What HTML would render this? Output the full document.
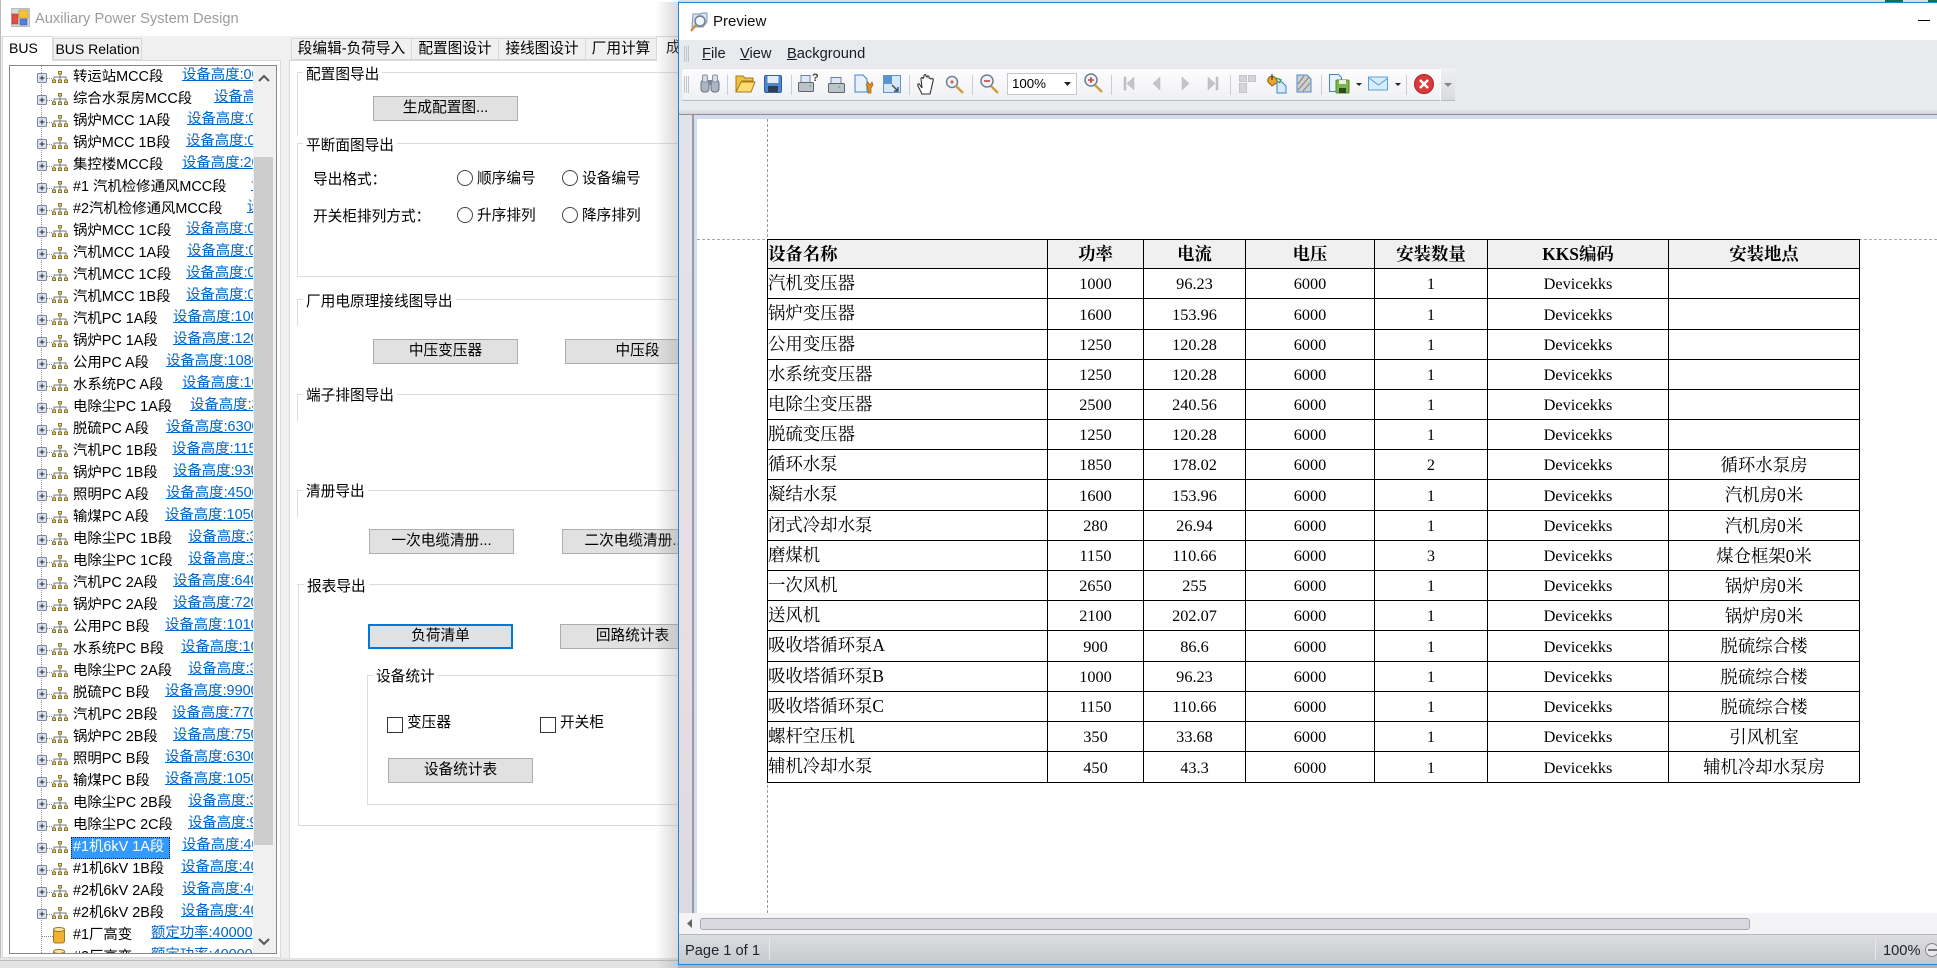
<!DOCTYPE html>
<html><head><meta charset="utf-8"><title>Auxiliary Power System Design</title>
<style>
html,body{margin:0;padding:0;width:1937px;height:968px;overflow:hidden;background:#e6e6e6;}
body{position:relative;font-family:"Liberation Sans","Noto Sans CJK SC",sans-serif;font-size:14.67px;color:#000;}
div,a,span,svg,b{box-sizing:border-box}
.a{position:absolute}
.t{position:absolute;line-height:20px;white-space:nowrap;font-size:14.67px}
.b{position:absolute;background:#e1e1e1;border:1px solid #adadad;height:25px;width:145px;text-align:center;line-height:22px;font-size:14.67px;white-space:nowrap}
.l{position:absolute;background:#dcdcdc}
.tab{position:absolute;top:38px;height:22px;background:#f0f0f0;border:1px solid #d9d9d9;text-align:center;line-height:20px;font-size:14.67px;white-space:nowrap;overflow:hidden}
.r{position:relative;height:22px;white-space:nowrap;font-size:14.4px}
.r svg{position:absolute;left:26px;top:2px;width:44px;height:22px}
.r b{position:absolute;left:63px;top:1px;font-weight:400;line-height:20px}
.r a{position:absolute;top:-1px;margin-left:-1px;line-height:20px;color:#0066cc;text-decoration:underline}
.rad{position:absolute;width:16px;height:16px;border:1px solid #444;border-radius:50%;background:#fff}
.chk{position:absolute;width:16px;height:16px;border:1px solid #333;background:#fff}
table{border-collapse:collapse;table-layout:fixed;width:1093px;font-family:"Liberation Serif","Noto Serif CJK SC",serif;font-size:16.3px;color:#000}
td,th{border:1px solid #000;text-align:center;box-sizing:border-box;line-height:20px;overflow:hidden;white-space:nowrap}
td{padding:1px 0 0}
th{padding:0 0 1px;background:#f0f0f0;font-size:17.4px;font-weight:700}
td.n,th.n{text-align:left;padding:0 0 2px;font-size:17.4px}
th.n{padding:0 0 1px}
td.c{font-size:17.4px;padding:0}
.m{position:absolute;top:44px;line-height:20px;font-size:14.67px;color:#1a1a2a}
.m u{text-decoration:underline}
</style></head><body>
<svg width="0" height="0" style="position:absolute"><defs>
<symbol id="n" viewBox="0 0 44 22">
<rect x="1.500" y="5.500" width="9" height="9" rx="1" fill="#dfe5f0" stroke="#7d88a0"/>
<path d="M3.500 10h5M6 7.500v5" stroke="#223" stroke-width="1"/>
<path d="M11 10.500h5" stroke="#888" stroke-dasharray="1 1"/>
<path d="M24 6v3M18 12V9h12v3M24 9v3" stroke="#777" fill="none"/>
<rect x="22.500" y="3.500" width="3" height="2.500" fill="#e8d890" stroke="#8a7a30"/>
<rect x="16.500" y="12" width="3" height="2.500" fill="#e8d890" stroke="#8a7a30"/>
<rect x="22.500" y="12" width="3" height="2.500" fill="#e8d890" stroke="#8a7a30"/>
<rect x="28.500" y="12" width="3" height="2.500" fill="#e8d890" stroke="#8a7a30"/>
</symbol>
<symbol id="c" viewBox="0 0 44 22">
<path d="M6 10.500h11" stroke="#888" stroke-dasharray="1 1"/>
<rect x="17.500" y="2" width="11" height="15" rx="2" fill="#f0b030" stroke="#a07820"/>
<ellipse cx="23" cy="3.500" rx="5.500" ry="2" fill="#fbe6a0" stroke="#a07820"/>
</symbol>
</defs></svg>

<!-- left app window -->
<div class="a" style="left:0;top:0;width:700px;height:36px;background:#fff"></div>
<div class="a" style="left:0;top:36px;width:700px;height:924px;background:#f0f0f0"></div>
<div class="a" style="left:0;top:0;width:1px;height:960px;background:#bbb"></div>
<svg class="a" style="left:11px;top:8px" width="19" height="19" viewBox="0 0 19 19">
<rect x=".5" y=".5" width="18" height="18" fill="#d8d8d8" stroke="#bbb"/>
<rect x="1" y="6" width="6" height="10" fill="#e05040" stroke="#a03020" stroke-width=".5"/>
<rect x="8" y="2" width="9" height="8" fill="#f4c040" stroke="#b08a20" stroke-width=".5"/>
<rect x="9" y="11" width="7" height="6" fill="#5080d8" stroke="#3050a0" stroke-width=".5"/>
</svg>
<div class="t" style="left:35px;top:9px;color:#9c9c9c;font-size:14.67px">Auxiliary Power System Design</div>

<!-- left tabs -->
<div class="a" style="left:2px;top:60px;width:279px;height:898px;background:#fff;border:1px solid #d9d9d9"></div>
<div class="tab" style="left:53px;width:89px;font-size:14px;line-height:21px">BUS Relation</div>
<div class="a" style="left:2px;top:36px;width:51px;height:25px;background:#fff;border:1px solid #d9d9d9;border-bottom:0;padding-left:6px;line-height:22px;font-size:14px">BUS</div>

<!-- tree -->
<div class="a" style="left:9px;top:65px;width:268px;height:889px;border:1px solid #828790;background:#fff"></div>
<div class="a" style="left:10px;top:66px;width:243px;height:887px;overflow:hidden;background:#fff">
<div class="a" style="left:31px;top:0;width:1px;height:887px;border-left:1px dotted #999"></div>
<div class="a" style="left:0;top:0;width:243px">
<div class="r"><svg><use href="#n"/></svg><b>转运站MCC段</b><a style="left:173px">设备高度:0000</a></div>
<div class="r"><svg><use href="#n"/></svg><b>综合水泵房MCC段</b><a style="left:205px">设备高度:0000</a></div>
<div class="r"><svg><use href="#n"/></svg><b>锅炉MCC 1A段</b><a style="left:178px">设备高度:0000</a></div>
<div class="r"><svg><use href="#n"/></svg><b>锅炉MCC 1B段</b><a style="left:177px">设备高度:0000</a></div>
<div class="r"><svg><use href="#n"/></svg><b>集控楼MCC段</b><a style="left:173px">设备高度:2000</a></div>
<div class="r"><svg><use href="#n"/></svg><b>#1 汽机检修通风MCC段</b><a style="left:242px">设备高度:0</a></div>
<div class="r"><svg><use href="#n"/></svg><b>#2汽机检修通风MCC段</b><a style="left:238px">设备高度:0</a></div>
<div class="r"><svg><use href="#n"/></svg><b>锅炉MCC 1C段</b><a style="left:177px">设备高度:0000</a></div>
<div class="r"><svg><use href="#n"/></svg><b>汽机MCC 1A段</b><a style="left:178px">设备高度:0000</a></div>
<div class="r"><svg><use href="#n"/></svg><b>汽机MCC 1C段</b><a style="left:177px">设备高度:0000</a></div>
<div class="r"><svg><use href="#n"/></svg><b>汽机MCC 1B段</b><a style="left:177px">设备高度:0000</a></div>
<div class="r"><svg><use href="#n"/></svg><b>汽机PC 1A段</b><a style="left:164px">设备高度:1000</a></div>
<div class="r"><svg><use href="#n"/></svg><b>锅炉PC 1A段</b><a style="left:164px">设备高度:1200</a></div>
<div class="r"><svg><use href="#n"/></svg><b>公用PC A段</b><a style="left:157px">设备高度:1080</a></div>
<div class="r"><svg><use href="#n"/></svg><b>水系统PC A段</b><a style="left:173px">设备高度:1000</a></div>
<div class="r"><svg><use href="#n"/></svg><b>电除尘PC 1A段</b><a style="left:181px">设备高度:3000</a></div>
<div class="r"><svg><use href="#n"/></svg><b>脱硫PC A段</b><a style="left:157px">设备高度:6300</a></div>
<div class="r"><svg><use href="#n"/></svg><b>汽机PC 1B段</b><a style="left:163px">设备高度:1150</a></div>
<div class="r"><svg><use href="#n"/></svg><b>锅炉PC 1B段</b><a style="left:164px">设备高度:9300</a></div>
<div class="r"><svg><use href="#n"/></svg><b>照明PC A段</b><a style="left:157px">设备高度:4500</a></div>
<div class="r"><svg><use href="#n"/></svg><b>输煤PC A段</b><a style="left:156px">设备高度:1050</a></div>
<div class="r"><svg><use href="#n"/></svg><b>电除尘PC 1B段</b><a style="left:179px">设备高度:3000</a></div>
<div class="r"><svg><use href="#n"/></svg><b>电除尘PC 1C段</b><a style="left:179px">设备高度:3000</a></div>
<div class="r"><svg><use href="#n"/></svg><b>汽机PC 2A段</b><a style="left:164px">设备高度:6400</a></div>
<div class="r"><svg><use href="#n"/></svg><b>锅炉PC 2A段</b><a style="left:164px">设备高度:7200</a></div>
<div class="r"><svg><use href="#n"/></svg><b>公用PC B段</b><a style="left:156px">设备高度:1010</a></div>
<div class="r"><svg><use href="#n"/></svg><b>水系统PC B段</b><a style="left:172px">设备高度:1000</a></div>
<div class="r"><svg><use href="#n"/></svg><b>电除尘PC 2A段</b><a style="left:179px">设备高度:3000</a></div>
<div class="r"><svg><use href="#n"/></svg><b>脱硫PC B段</b><a style="left:156px">设备高度:9900</a></div>
<div class="r"><svg><use href="#n"/></svg><b>汽机PC 2B段</b><a style="left:163px">设备高度:7700</a></div>
<div class="r"><svg><use href="#n"/></svg><b>锅炉PC 2B段</b><a style="left:164px">设备高度:7500</a></div>
<div class="r"><svg><use href="#n"/></svg><b>照明PC B段</b><a style="left:156px">设备高度:6300</a></div>
<div class="r"><svg><use href="#n"/></svg><b>输煤PC B段</b><a style="left:156px">设备高度:1050</a></div>
<div class="r"><svg><use href="#n"/></svg><b>电除尘PC 2B段</b><a style="left:179px">设备高度:3000</a></div>
<div class="r"><svg><use href="#n"/></svg><b>电除尘PC 2C段</b><a style="left:179px">设备高度:9000</a></div>
<div class="r"><svg><use href="#n"/></svg><b style="left:61px;top:1px;width:99px;height:22px;background:#3399ff;color:#fff;outline:1px dotted #123;outline-offset:-1px;padding-left:2px">#1机6kV 1A段</b><a style="left:173px">设备高度:4000</a></div>
<div class="r"><svg><use href="#n"/></svg><b>#1机6kV 1B段</b><a style="left:172px">设备高度:4000</a></div>
<div class="r"><svg><use href="#n"/></svg><b>#2机6kV 2A段</b><a style="left:173px">设备高度:4000</a></div>
<div class="r"><svg><use href="#n"/></svg><b>#2机6kV 2B段</b><a style="left:172px">设备高度:4000</a></div>
<div class="r"><svg><use href="#c"/></svg><b>#1厂高变</b><a style="left:142px">额定功率:40000</a></div>
<div class="r"><svg><use href="#c"/></svg><b>#2厂高变</b><a style="left:142px">额定功率:40000</a></div>
</div></div>
<!-- tree scrollbar -->
<div class="a" style="left:253px;top:66px;width:23px;height:887px;background:#f0f0f0"></div>
<div class="a" style="left:254px;top:157px;width:19px;height:688px;background:#cdcdcd"></div>
<svg class="a" style="left:254px;top:66px" width="22" height="887" viewBox="0 0 22 887">
<path d="M5 15l5-5 5 5" fill="none" stroke="#555" stroke-width="2"/>
<path d="M5 873l5 5 5-5" fill="none" stroke="#555" stroke-width="2"/>
</svg>

<!-- right tabs -->
<div class="a" style="left:289px;top:60px;width:420px;height:900px;background:#fff;border:1px solid #d9d9d9"></div>
<div class="tab" style="left:291px;width:121px">段编辑-负荷导入</div>
<div class="tab" style="left:411px;width:88px">配置图设计</div>
<div class="tab" style="left:498px;width:88px">接线图设计</div>
<div class="tab" style="left:585px;width:72px">厂用计算</div>
<div class="a" style="left:656px;top:36px;width:60px;height:25px;background:#fff;border:1px solid #d9d9d9;border-bottom:0;padding-left:9px;line-height:22px">成</div>

<!-- groups -->
<div class="l" style="left:297px;top:72px;width:400px;height:1px"></div>
<div class="l" style="left:297px;top:72px;width:1px;height:64px"></div>
<div class="t" style="left:303px;top:65px;background:#fff;padding:0 3px">配置图导出</div>
<div class="b" style="left:373px;top:96px">生成配置图...</div>

<div class="l" style="left:297px;top:143px;width:400px;height:1px"></div>
<div class="l" style="left:297px;top:143px;width:1px;height:134px"></div>
<div class="l" style="left:297px;top:276px;width:400px;height:1px"></div>
<div class="t" style="left:303px;top:136px;background:#fff;padding:0 3px">平断面图导出</div>
<div class="t" style="left:313px;top:170px">导出格式：</div>
<div class="rad" style="left:457px;top:170px"></div><div class="t" style="left:477px;top:169px">顺序编号</div>
<div class="rad" style="left:562px;top:170px"></div><div class="t" style="left:582px;top:169px">设备编号</div>
<div class="t" style="left:313px;top:207px">开关柜排列方式：</div>
<div class="rad" style="left:457px;top:207px"></div><div class="t" style="left:477px;top:206px">升序排列</div>
<div class="rad" style="left:562px;top:207px"></div><div class="t" style="left:582px;top:206px">降序排列</div>

<div class="l" style="left:297px;top:299px;width:400px;height:1px"></div>
<div class="l" style="left:297px;top:299px;width:1px;height:27px"></div>
<div class="t" style="left:303px;top:292px;background:#fff;padding:0 3px">厂用电原理接线图导出</div>
<div class="b" style="left:373px;top:339px">中压变压器</div>
<div class="b" style="left:565px;top:339px">中压段</div>

<div class="l" style="left:297px;top:394px;width:400px;height:1px"></div>
<div class="l" style="left:297px;top:394px;width:1px;height:27px"></div>
<div class="t" style="left:303px;top:386px;background:#fff;padding:0 3px">端子排图导出</div>

<div class="l" style="left:297px;top:490px;width:400px;height:1px"></div>
<div class="l" style="left:297px;top:490px;width:1px;height:27px"></div>
<div class="t" style="left:303px;top:482px;background:#fff;padding:0 3px">清册导出</div>
<div class="b" style="left:369px;top:529px">一次电缆清册...</div>
<div class="b" style="left:562px;top:529px">二次电缆清册...</div>

<div class="l" style="left:297px;top:584px;width:400px;height:1px"></div>
<div class="l" style="left:298px;top:584px;width:1px;height:242px"></div>
<div class="l" style="left:298px;top:825px;width:400px;height:1px"></div>
<div class="t" style="left:304px;top:577px;background:#fff;padding:0 3px">报表导出</div>
<div class="b" style="left:368px;top:624px;border:2px solid #0078d7;line-height:21px">负荷清单</div>
<div class="b" style="left:560px;top:624px">回路统计表</div>

<div class="l" style="left:367px;top:675px;width:330px;height:1px"></div>
<div class="l" style="left:367px;top:675px;width:1px;height:130px"></div>
<div class="l" style="left:367px;top:804px;width:330px;height:1px"></div>
<div class="t" style="left:373px;top:667px;background:#fff;padding:0 3px">设备统计</div>
<div class="chk" style="left:387px;top:717px"></div><div class="t" style="left:407px;top:713px">变压器</div>
<div class="chk" style="left:540px;top:717px"></div><div class="t" style="left:560px;top:713px">开关柜</div>
<div class="b" style="left:388px;top:758px">设备统计表</div>

<!-- bottom strip left -->
<div class="a" style="left:0;top:958px;width:678px;height:10px;background:#e4e4e4"></div>
<div class="a" style="left:0;top:960px;width:678px;height:1px;background:#bdbdbd"></div>

<!-- preview shadow -->
<div class="a" style="left:655px;top:2px;width:23px;height:966px;background:linear-gradient(90deg,rgba(150,150,160,0),rgba(150,150,160,.35))"></div>

<!-- top strip right -->
<div class="a" style="left:678px;top:0;width:1259px;height:2px;background:#dedede"></div>
<div class="a" style="left:1885px;top:0;width:18px;height:2px;background:#1a6f4a"></div>
<div class="a" style="left:1928px;top:0;width:9px;height:2px;background:#1a6f4a"></div>

<!-- preview window -->
<div class="a" style="left:678px;top:2px;width:1259px;height:963px;background:#e9eaee;border:1px solid #1c86d8;border-right:0"></div>
<div class="a" style="left:679px;top:3px;width:1258px;height:37px;background:#fff"></div>
<svg class="a" style="left:689px;top:11px" width="20" height="22" viewBox="0 0 20 22">
<path d="M4 3h7l2-1h5v9l-4 5H3z" fill="#d8e2f2" stroke="#7d93b5"/>
<circle cx="11" cy="10" r="5" fill="#eef5fb" stroke="#6d7c8f" stroke-width="1.400"/>
<path d="M7 14l-5 6" stroke="#c9913c" stroke-width="2.400"/>
</svg>
<div class="t" style="left:713px;top:12px;font-size:15px;color:#111">Preview</div>
<div class="a" style="left:1918px;top:20px;width:12px;height:1px;background:#000"></div>

<!-- menu bar -->
<div class="a" style="left:684px;top:46px;width:6px;height:16px;background:repeating-linear-gradient(90deg,#c4c5cb 0 1px,transparent 1px 2px)"></div>
<div class="m" style="left:702px"><u>F</u>ile</div>
<div class="m" style="left:740px"><u>V</u>iew</div>
<div class="m" style="left:787px"><u>B</u>ackground</div>

<!-- preview body -->
<div class="a" style="left:679px;top:101px;width:1258px;height:13px;background:linear-gradient(#e9eaee 60%,#d4d4d8)"></div>
<div class="a" style="left:679px;top:114px;width:1258px;height:1px;background:#8e8e94"></div>
<div class="a" style="left:679px;top:115px;width:15px;height:798px;background:linear-gradient(170deg,#e2e3e8,#e7dde2 70%,#dcd9e0);border-right:2px solid #9a9aa2"></div>
<div class="a" style="left:694px;top:115px;width:1243px;height:798px;background:#fff;border-left:3px solid #d4dcf2;border-top:4px solid #d4dcf2"></div>
<div class="a" style="left:767px;top:119px;width:1px;height:794px;border-left:1px dashed #999"></div>
<div class="a" style="left:697px;top:239px;width:1240px;height:1px;border-top:1px dashed #aaa"></div>

<!-- toolbar -->
<div class="a" style="left:681px;top:68px;width:774px;height:33px;background:linear-gradient(#fdfdfe,#eff0f3);border:1px solid #e2e3e7;border-bottom:1px solid #b9bac2;border-radius:3px"></div>
<div class="a" style="left:1440px;top:68px;width:15px;height:33px;background:linear-gradient(#f0f1f3,#d9dadf);border-left:1px solid #fff;border-bottom:1px solid #b9bac2"></div>
<div class="a" style="left:684px;top:76px;width:6px;height:17px;background:repeating-linear-gradient(90deg,#c4c5cb 0 1px,transparent 1px 2px)"></div>
<div class="a" style="left:1007px;top:73px;width:70px;height:22px;background:#fff;border:1px solid #c8c8cc;padding-left:4px;line-height:20px;font-size:13.3px">100%</div>
<svg class="a" style="left:0;top:60px;pointer-events:none" width="1460" height="50" viewBox="0 60 1460 50">
<g stroke="#ccced4"><path d="M727.500 75v20M791.500 75v20M909.500 75v20M972.500 75v20M1111.500 75v20M1230.500 75v20M1321.500 75v20M1406.500 75v20"/></g>
<!-- binoculars -->
<rect x="701" y="80" width="8" height="12" rx="3" fill="#aab6c4" stroke="#66707c"/><rect x="711" y="80" width="8" height="12" rx="3" fill="#aab6c4" stroke="#66707c"/>
<rect x="702.500" y="75" width="5" height="7" rx="1.500" fill="#d6dde6" stroke="#88929e"/><rect x="712.500" y="75" width="5" height="7" rx="1.500" fill="#d6dde6" stroke="#88929e"/>
<rect x="708" y="80" width="4" height="5" fill="#7d8894"/>
<!-- folder -->
<path d="M736 92V76h7l2 2h8v3h-11l-5 11z" fill="#f0c040" stroke="#a37a18"/><path d="M736 92l5-10h14l-4 10z" fill="#ffdc70" stroke="#a37a18"/>
<!-- save -->
<rect x="764.500" y="75.500" width="17" height="17" rx="1.500" fill="#4d88cc" stroke="#305f9a"/><rect x="767.500" y="76" width="11" height="7" fill="#e8edf4"/><rect x="768" y="86" width="10" height="6" fill="#2d3e55"/>
<!-- print preview -->
<rect x="801" y="75.500" width="9" height="7" fill="#dfe9f4" stroke="#6a82a0"/><rect x="798.500" y="82.500" width="15" height="9" rx="1" fill="#bcc2ca" stroke="#5c646e"/><circle cx="810" cy="86" r="1" fill="#5c5"/>
<text x="812" y="81" font-family="Liberation Sans" font-weight="700" font-size="11" fill="#444">?</text>
<!-- print -->
<rect x="831" y="77.500" width="10" height="6" fill="#dfe9f4" stroke="#6a82a0"/><rect x="828.500" y="83.500" width="16" height="9" rx="1" fill="#bcc2ca" stroke="#5c646e"/><circle cx="839" cy="87" r="1" fill="#5c5"/>
<!-- page setup -->
<path d="M855 75h8l4 4v13h-12z" fill="#e8f0fa" stroke="#3f84cc"/>
<path d="M868 82l2 3 2-3 1 3-2 3v5h-3v-5l-2-3z" fill="#e09020" stroke="#a05c10" stroke-width=".7"/>
<!-- scale -->
<rect x="883.500" y="75.500" width="17" height="17" fill="#d8e8f8" stroke="#5b94cf"/><rect x="884" y="76" width="8" height="8" fill="#5b94cf"/><path d="M892 85l6 6M898 87v4h-4" stroke="#3a4a60" fill="none" stroke-width="1.400"/>
<!-- hand -->
<path d="M922 94l-4-8c-1-2 1-3 2-1l2 3-1-9c0-2 2-2 2 0l1-3c0-2 2-2 2 0l1 1c0-2 3-1 2 1l2 1c1-1 3 0 2 2l-2 9-1 4z" fill="#fff" stroke="#333" stroke-width="1.100"/>
<!-- zoom -->
<circle cx="952" cy="82" r="5.500" fill="#eef4fa" stroke="#6f7f90" stroke-width="1.500"/><circle cx="952" cy="82" r="1.600" fill="#d06060"/><path d="M956 86l7 7" stroke="#d09a40" stroke-width="2.400"/>
<!-- zoom out -->
<circle cx="987" cy="81" r="6" fill="#eef4fa" stroke="#6f7f90" stroke-width="1.500"/><path d="M984 81h6" stroke="#d04040" stroke-width="1.600"/><path d="M991 86l7 7" stroke="#d09a40" stroke-width="2.400"/>
<path d="M1064 82h7l-3.500 4z" fill="#222"/>
<!-- zoom in -->
<circle cx="1091" cy="80" r="6" fill="#eef4fa" stroke="#6f7f90" stroke-width="1.500"/><path d="M1088 80h6M1091 77v6" stroke="#d04040" stroke-width="1.600"/><path d="M1095 85l7 7" stroke="#d09a40" stroke-width="2.400"/>
<!-- nav -->
<g fill="#c2c4c8" stroke="#b4b6ba" stroke-width=".5"><rect x="1124" y="77" width="2" height="13"/><path d="M1134 77v13l-7-6.500z"/><path d="M1160 77v13l-7-6.500z"/><path d="M1182 77v13l7-6.500z"/><path d="M1208 77v13l7-6.500z"/><rect x="1216" y="77" width="2" height="13"/></g>
<!-- pages -->
<g fill="#d4d5d8" stroke="#c4c5c8"><path d="M1239.500 75.500h7v6h-7zM1248.500 75.500h7v6h-7zM1239.500 83.500h7v9h-7z"/></g>
<!-- watermark-ish -->
<path d="M1268 82a4 4 0 0 1 8-3l2 3-6 4z" fill="#e8a530" stroke="#8a6010"/><path d="M1272 74v6" stroke="#222"/>
<path d="M1277 82h5l4 4v7h-9z" fill="#d8e8f8" stroke="#3f84cc"/><path d="M1276 78l5 2-2 3" stroke="#30a040" fill="none" stroke-width="1.400"/>
<!-- hatch -->
<path d="M1297 75h10l4 4v13h-14z" fill="#d0d0d0" stroke="#4a88cc"/><path d="M1298 84l6-8M1298 90l11-13M1303 91l7-8" stroke="#8a8a8a" stroke-width="1.200"/>
<!-- save green -->
<path d="M1329.500 74.500h9l3 3v14h-12z" fill="#e8f2fc" stroke="#3f84cc"/><rect x="1336" y="80" width="13" height="13" rx="1" fill="#78b848" stroke="#4d8a2a"/><rect x="1339" y="80" width="7" height="4" fill="#e8f0e0"/><rect x="1339" y="88" width="7" height="5" fill="#304a20"/>
<path d="M1356 83h6l-3 3z" fill="#222"/>
<!-- mail -->
<rect x="1368.500" y="77" width="19" height="13" fill="#d8ecfa" stroke="#5aa0d8"/><path d="M1369 78l9.500 7 9.500-7" fill="none" stroke="#5aa0d8"/>
<path d="M1395 83h6l-3 3z" fill="#222"/>
<!-- close -->
<circle cx="1424" cy="84" r="9.500" fill="#dc3a3a" stroke="#a02828"/><path d="M1420 80l8 8M1428 80l-8 8" stroke="#fff" stroke-width="2.600"/>
<path d="M1444 83h8l-4 4z" fill="#888"/>
</svg>

<!-- table -->
<div class="a" style="left:767px;top:239px">
<table>
<colgroup><col style="width:280px"><col style="width:96px"><col style="width:102px"><col style="width:129px"><col style="width:113px"><col style="width:181px"><col style="width:191px"></colgroup>
<tr style="height:29px"><th class="n">设备名称</th><th>功率</th><th>电流</th><th>电压</th><th>安装数量</th><th>KKS编码</th><th>安装地点</th></tr>
<tr style="height:30px"><td class="n">汽机变压器</td><td>1000</td><td>96.23</td><td>6000</td><td>1</td><td>Devicekks</td><td class="c"></td></tr>
<tr style="height:31px"><td class="n">锅炉变压器</td><td>1600</td><td>153.96</td><td>6000</td><td>1</td><td>Devicekks</td><td class="c"></td></tr>
<tr style="height:30px"><td class="n">公用变压器</td><td>1250</td><td>120.28</td><td>6000</td><td>1</td><td>Devicekks</td><td class="c"></td></tr>
<tr style="height:30px"><td class="n">水系统变压器</td><td>1250</td><td>120.28</td><td>6000</td><td>1</td><td>Devicekks</td><td class="c"></td></tr>
<tr style="height:30px"><td class="n">电除尘变压器</td><td>2500</td><td>240.56</td><td>6000</td><td>1</td><td>Devicekks</td><td class="c"></td></tr>
<tr style="height:30px"><td class="n">脱硫变压器</td><td>1250</td><td>120.28</td><td>6000</td><td>1</td><td>Devicekks</td><td class="c"></td></tr>
<tr style="height:30px"><td class="n">循环水泵</td><td>1850</td><td>178.02</td><td>6000</td><td>2</td><td>Devicekks</td><td class="c">循环水泵房</td></tr>
<tr style="height:31px"><td class="n">凝结水泵</td><td>1600</td><td>153.96</td><td>6000</td><td>1</td><td>Devicekks</td><td class="c">汽机房0米</td></tr>
<tr style="height:30px"><td class="n">闭式冷却水泵</td><td>280</td><td>26.94</td><td>6000</td><td>1</td><td>Devicekks</td><td class="c">汽机房0米</td></tr>
<tr style="height:30px"><td class="n">磨煤机</td><td>1150</td><td>110.66</td><td>6000</td><td>3</td><td>Devicekks</td><td class="c">煤仓框架0米</td></tr>
<tr style="height:30px"><td class="n">一次风机</td><td>2650</td><td>255</td><td>6000</td><td>1</td><td>Devicekks</td><td class="c">锅炉房0米</td></tr>
<tr style="height:30px"><td class="n">送风机</td><td>2100</td><td>202.07</td><td>6000</td><td>1</td><td>Devicekks</td><td class="c">锅炉房0米</td></tr>
<tr style="height:31px"><td class="n">吸收塔循环泵A</td><td>900</td><td>86.6</td><td>6000</td><td>1</td><td>Devicekks</td><td class="c">脱硫综合楼</td></tr>
<tr style="height:30px"><td class="n">吸收塔循环泵B</td><td>1000</td><td>96.23</td><td>6000</td><td>1</td><td>Devicekks</td><td class="c">脱硫综合楼</td></tr>
<tr style="height:30px"><td class="n">吸收塔循环泵C</td><td>1150</td><td>110.66</td><td>6000</td><td>1</td><td>Devicekks</td><td class="c">脱硫综合楼</td></tr>
<tr style="height:30px"><td class="n">螺杆空压机</td><td>350</td><td>33.68</td><td>6000</td><td>1</td><td>Devicekks</td><td class="c">引风机室</td></tr>
<tr style="height:31px"><td class="n">辅机冷却水泵</td><td>450</td><td>43.3</td><td>6000</td><td>1</td><td>Devicekks</td><td class="c">辅机冷却水泵房</td></tr>
</table>
</div>

<!-- hscroll -->
<div class="a" style="left:679px;top:913px;width:1258px;height:21px;background:#f4f4f7"></div>
<svg class="a" style="left:686px;top:918px" width="8" height="11"><path d="M6 1v9L1 5.500z" fill="#666"/></svg>
<div class="a" style="left:700px;top:918px;width:1050px;height:12px;background:#d9d9df;border:1px solid #a9a9b5;border-radius:3px"></div>

<!-- status bar -->
<div class="a" style="left:679px;top:934px;width:1258px;height:30px;background:linear-gradient(#dcdde0,#c8c9ce);border-top:1px solid #b8b8c0"></div>
<div class="t" style="left:685px;top:941px;font-size:14.67px;color:#223">Page 1 of 1</div>
<div class="a" style="left:769px;top:938px;width:1px;height:22px;background:#e8e8ec"></div>
<div class="a" style="left:1875px;top:938px;width:1px;height:22px;background:#e8e8ec"></div>
<div class="t" style="left:1883px;top:941px;font-size:14.67px;color:#223">100%</div>
<div class="a" style="left:1925px;top:943px;width:14px;height:14px;border-radius:50%;background:#e8e8ec;border:1px solid #888"></div>
<div class="a" style="left:1928px;top:949px;width:9px;height:2px;background:#777"></div>
<div class="a" style="left:678px;top:964px;width:1259px;height:1px;background:#1c86d8"></div>
<div class="a" style="left:678px;top:965px;width:1259px;height:3px;background:#b4b4b8"></div>
</body></html>
